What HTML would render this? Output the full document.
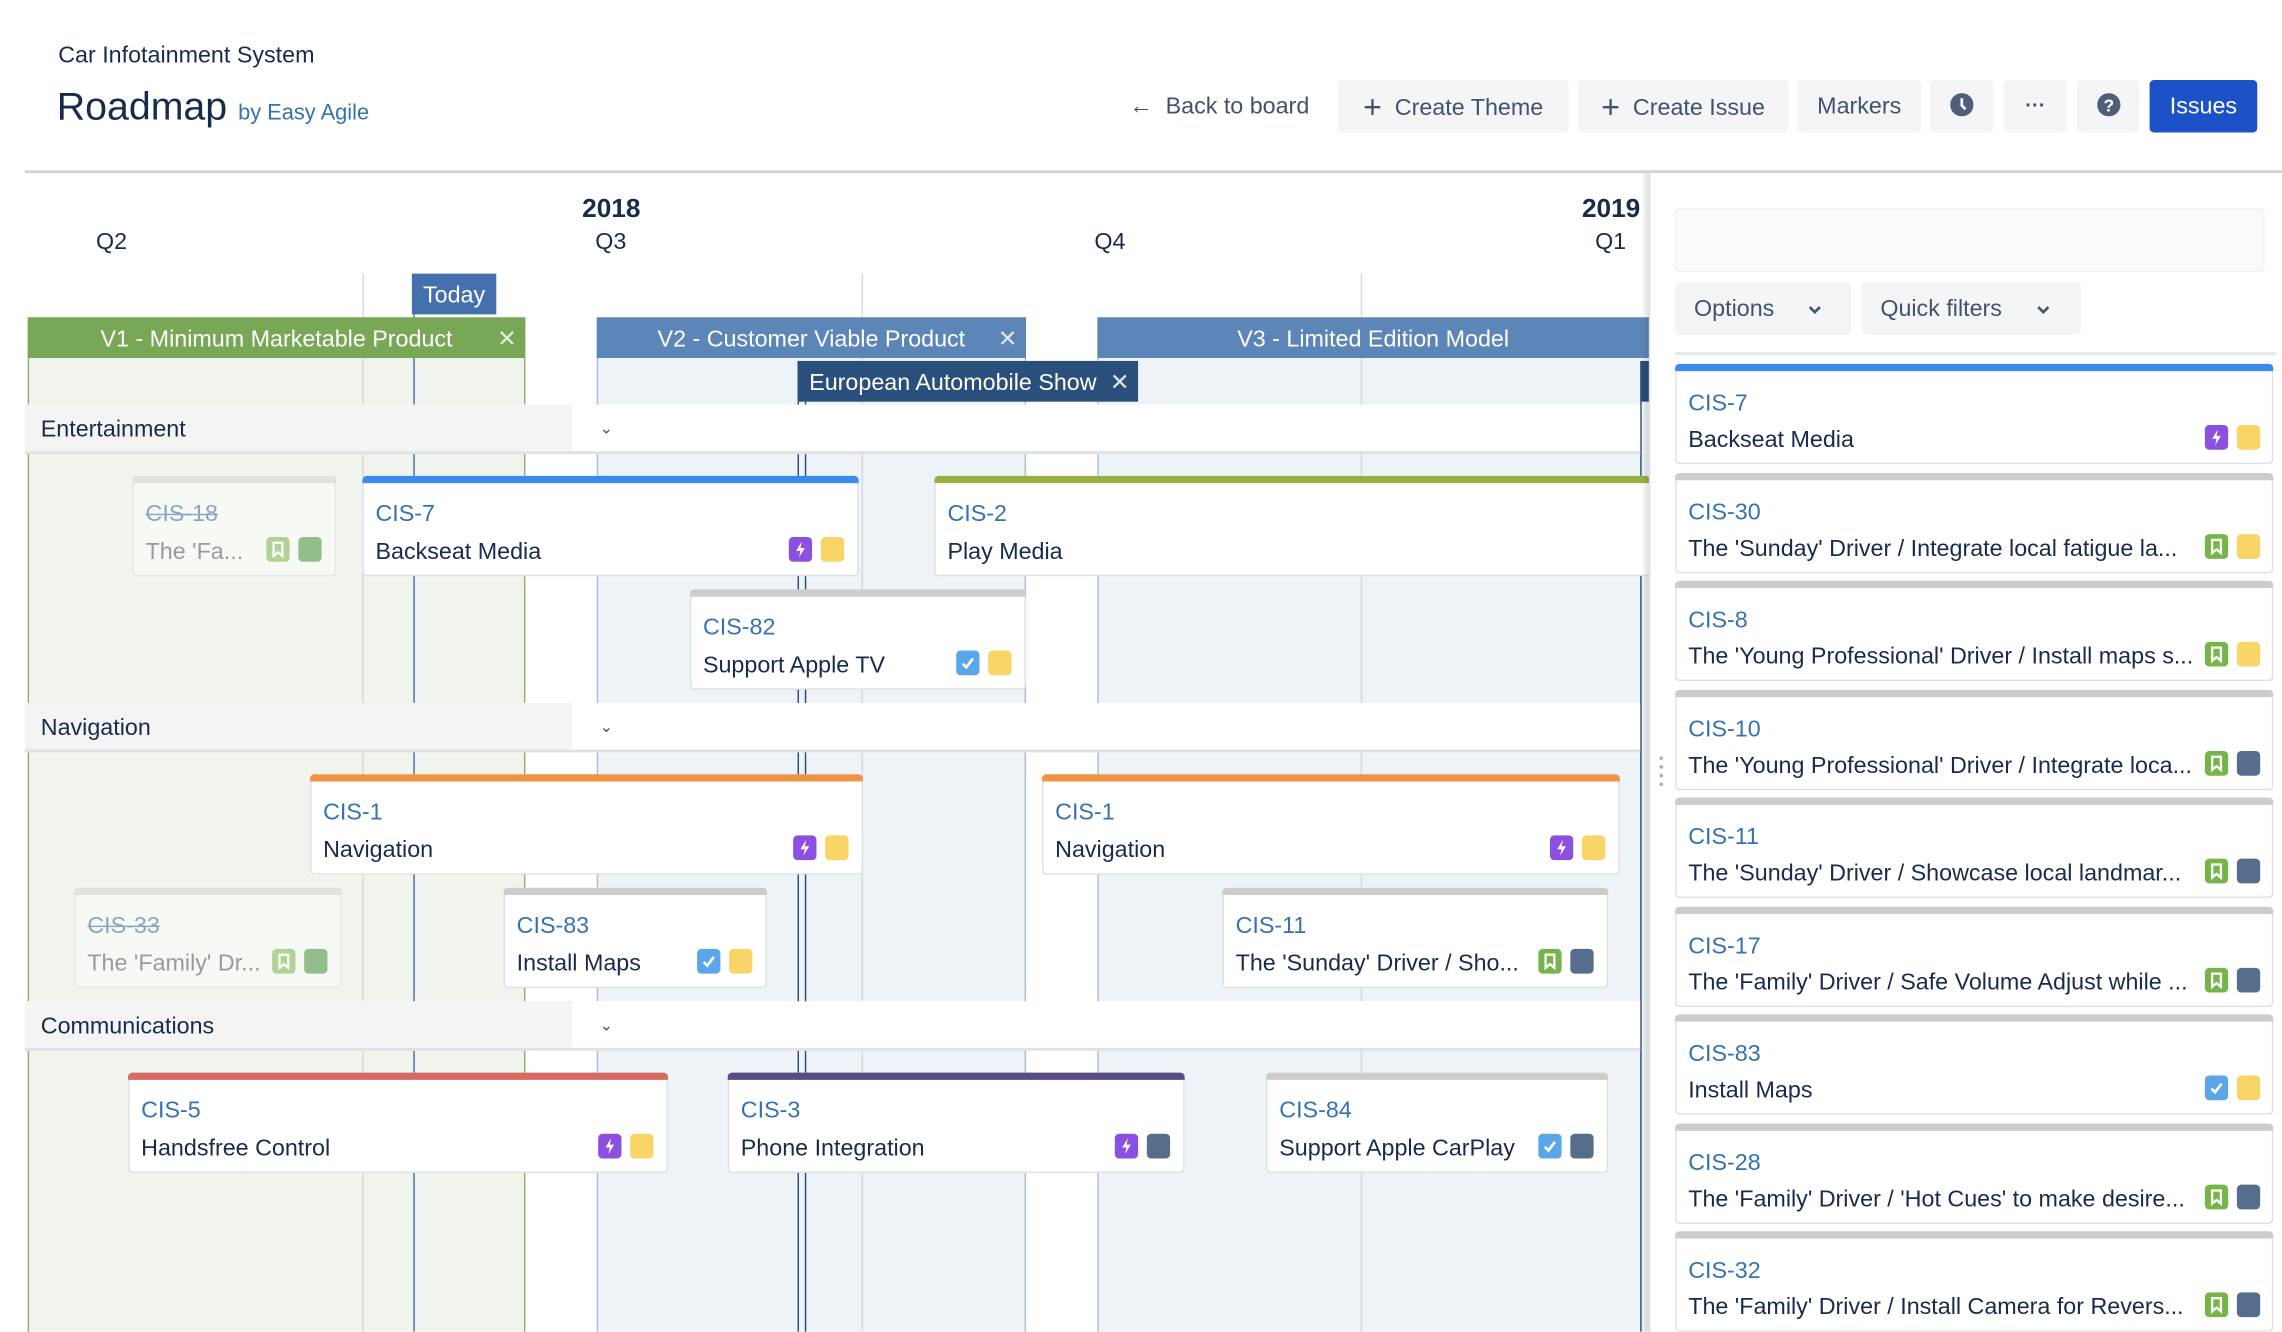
<!DOCTYPE html>
<html><head><meta charset="utf-8">
<style>
html,body{margin:0;padding:0;background:#fff;overflow:hidden;width:2282px;height:1331px}
#w{position:absolute;left:0;top:0;width:1568px;height:915px;transform:scale(1.45536);transform-origin:0 0;font-family:"Liberation Sans",Arial,sans-serif;color:#172b4d}
.a{position:absolute}
.btn{position:absolute;top:55px;height:36px;background:#f4f5f7;border-radius:3px;color:#42526e;font-size:16px;line-height:38px;text-align:center}
.vl{position:absolute;width:1px}
.card{position:absolute;height:69px;background:#fff;border:1px solid #dcdfe4;border-top:none;border-radius:3px;box-sizing:border-box}
.card .bar{position:absolute;left:-1px;right:-1px;top:0;height:5px;border-radius:3px 3px 0 0}
.card .k{position:absolute;left:8px;top:18px;font-size:16px;color:#3572b0;line-height:18px}
.card .t{position:absolute;left:8px;top:44px;font-size:16px;color:#172b4d;line-height:18px;white-space:nowrap}
.card .ics{position:absolute;right:9px;top:42px;height:17px;display:flex;gap:6px}
.ic{display:block;width:16px;height:17px;border-radius:3px}
.ic svg{display:block;width:16px;height:17px}
.pu{background:#8b50df}.ye{background:#f9d467}.gr{background:#77b449}.bl{background:#5aa6e8}.sl{background:#566d8c}.gg{background:#94bd8c}
.fade{background:#f7f9f5;border-color:#e4e7e0}
.fade .k{color:#8aa6c6;text-decoration:line-through}
.fade .t{color:#9a9a9a}
.lane{position:absolute;left:17px;width:1110px;height:32px;background:#fff;border-bottom:2px solid #dfe1e4}
.lane .h{position:absolute;left:0;top:0;width:376px;height:32px;background:#f4f4f4;font-size:16px;line-height:36px;padding-left:11px;box-sizing:border-box}
.lane .c{position:absolute;left:395px;top:0;line-height:34px;font-size:11px;color:#42526e}
.ver{position:absolute;top:218px;height:28px;color:#fff;font-size:16px;line-height:31px;text-align:center}
.ver .x{position:absolute;right:6px;top:0;font-size:16px;opacity:.8}
.rc{position:absolute;left:1151px;width:411px;height:69px;background:#fff;border:1px solid #dcdfe4;border-top:none;border-radius:3px;box-sizing:border-box}
.rc .bar{position:absolute;left:-1px;right:-1px;top:0;height:5px;border-radius:3px 3px 0 0;background:#ccc}
.rc .k{position:absolute;left:8px;top:19px;font-size:16px;color:#3572b0;line-height:18px}
.rc .t{position:absolute;left:8px;top:44px;font-size:16px;line-height:18px;white-space:nowrap}
.rc .ics{position:absolute;right:8px;top:42px;display:flex;gap:6px}
</style></head><body><div id="w">

<div class="a" style="left:40px;top:30px;font-size:16px">Car Infotainment System</div>
<div class="a" style="left:39px;top:58px;font-size:27px">Roadmap <span style="font-size:15px;color:#3572b0">by Easy Agile</span></div>

<div class="a" style="left:776px;top:56px;height:36px;line-height:36px;font-size:16px;color:#42526e">&#8592;&nbsp;&nbsp;Back to board</div>
<div class="btn" style="left:919px;width:159px"><span style="font-size:22px;vertical-align:-2px">+</span>&nbsp;&nbsp;Create Theme</div>
<div class="btn" style="left:1084px;width:145px"><span style="font-size:22px;vertical-align:-2px">+</span>&nbsp;&nbsp;Create Issue</div>
<div class="btn" style="left:1235px;width:85px">Markers</div>
<div class="btn" style="left:1326px;width:44px"><svg width="16" height="16" viewBox="0 0 16 16" style="margin-top:9px"><circle cx="8" cy="8" r="8" fill="#505f79"/><path d="M8 3.5V8.5L10.5 11" stroke="#fff" stroke-width="1.8" fill="none"/></svg></div>
<div class="btn" style="left:1377px;width:43px;font-size:14px;line-height:34px;font-weight:bold">&middot;&middot;&middot;</div>
<div class="btn" style="left:1427px;width:43px"><svg width="16" height="16" viewBox="0 0 16 16" style="margin-top:9px"><circle cx="8" cy="8" r="8" fill="#505f79"/><text x="8" y="12.5" font-size="12" font-weight="bold" fill="#fff" text-anchor="middle" font-family="Liberation Sans">?</text></svg></div>
<div class="btn" style="left:1477px;width:74px;background:#1d51c8;color:#fff">Issues</div>

<div class="a" style="left:17px;top:117px;width:1551px;height:2px;background:#d0d2d6"></div>

<div class="a" style="left:400px;top:133px;font-size:18px;font-weight:bold">2018</div>
<div class="a" style="left:1087px;top:133px;font-size:18px;font-weight:bold">2019</div>
<div class="a" style="left:66px;top:158px;font-size:16px">Q2</div>
<div class="a" style="left:409px;top:158px;font-size:16px">Q3</div>
<div class="a" style="left:752px;top:158px;font-size:16px">Q4</div>
<div class="a" style="left:1096px;top:158px;font-size:16px">Q1</div>

<div class="a" style="left:19px;top:246px;width:342px;height:669px;background:#f0f4ec;border-left:1px solid #8db46a;border-right:1px solid #8db46a;box-sizing:border-box"></div>
<div class="a" style="left:410px;top:246px;width:295px;height:669px;background:#eef3f8;border-left:1px solid #a9bfd9;border-right:1px solid #a9bfd9;box-sizing:border-box"></div>
<div class="a" style="left:754px;top:246px;width:379px;height:669px;background:#eef3f8;border-left:1px solid #a9bfd9;box-sizing:border-box"></div>
<div class="vl" style="left:249px;top:188px;height:727px;background:#d6d8db"></div>
<div class="vl" style="left:592px;top:188px;height:727px;background:#d6d8db"></div>
<div class="vl" style="left:935px;top:188px;height:727px;background:#d6d8db"></div>
<div class="vl" style="left:284px;top:216px;height:699px;background:#4470ad"></div>
<div class="vl" style="left:548px;top:276px;height:639px;background:#2a4c7a"></div>
<div class="vl" style="left:553px;top:276px;height:639px;background:#2a4c7a"></div>
<div class="a" style="left:1127px;top:248px;width:6px;height:28px;background:#2a4c7a"></div>
<div class="vl" style="left:1127px;top:276px;height:639px;background:#2a4c7a"></div>

<div class="a" style="left:283px;top:188px;width:58px;height:28px;background:#4470ad;color:#fff;font-size:16px;line-height:31px;text-align:center">Today</div>
<div class="ver" style="left:19px;width:342px;background:#78a855">V1 - Minimum Marketable Product<span class="x">&#10005;</span></div>
<div class="ver" style="left:410px;width:295px;background:#5d86b8">V2 - Customer Viable Product<span class="x">&#10005;</span></div>
<div class="ver" style="left:754px;width:379px;background:#5d86b8">V3 - Limited Edition Model</div>
<div class="a" style="left:548px;top:248px;width:234px;height:28px;background:#2b4f7c;color:#fff;font-size:16px;line-height:31px;padding-left:8px;box-sizing:border-box">European Automobile Show<span style="position:absolute;right:6px;opacity:.85">&#10005;</span></div>

<div class="lane" style="top:278px"><div class="h">Entertainment</div><div class="c">&#8964;</div></div>
<div class="lane" style="top:483px"><div class="h">Navigation</div><div class="c">&#8964;</div></div>
<div class="lane" style="top:688px"><div class="h">Communications</div><div class="c">&#8964;</div></div>

<div class="card fade" style="left:91px;top:327px;width:140px"><div class="bar" style="background:#e0e2de"></div><div class="k">CIS-18</div><div class="t">The 'Fa...</div><div class="ics"><i class="ic gr" style="opacity:.55"><svg viewBox="0 0 16 17"><path d="M5 4h6v9l-3-2.5L5 13z" fill="none" stroke="#fff" stroke-width="1.6"/></svg></i><i class="ic gg"></i></div></div>

<div class="card" style="left:249px;top:327px;width:341px"><div class="bar" style="background:#3b8bef"></div><div class="k">CIS-7</div><div class="t">Backseat Media</div><div class="ics"><i class="ic pu"><svg viewBox="0 0 16 17"><path d="M9 3L5 9.5h3L7 14l4-6.5H8z" fill="#fff"/></svg></i><i class="ic ye"></i></div></div>

<div class="card" style="left:642px;top:327px;width:491px;border-right:none"><div class="bar" style="background:#96b043"></div><div class="k">CIS-2</div><div class="t">Play Media</div></div>

<div class="card" style="left:474px;top:405px;width:231px"><div class="bar" style="background:#cccccc"></div><div class="k">CIS-82</div><div class="t">Support Apple TV</div><div class="ics"><i class="ic bl"><svg viewBox="0 0 16 17"><path d="M4.5 9l2.5 2.5 4.5-6" stroke="#fff" stroke-width="1.8" fill="none"/></svg></i><i class="ic ye"></i></div></div>

<div class="card" style="left:213px;top:532px;width:380px"><div class="bar" style="background:#ee9444"></div><div class="k">CIS-1</div><div class="t">Navigation</div><div class="ics"><i class="ic pu"><svg viewBox="0 0 16 17"><path d="M9 3L5 9.5h3L7 14l4-6.5H8z" fill="#fff"/></svg></i><i class="ic ye"></i></div></div>

<div class="card" style="left:716px;top:532px;width:397px"><div class="bar" style="background:#ee9444"></div><div class="k">CIS-1</div><div class="t">Navigation</div><div class="ics"><i class="ic pu"><svg viewBox="0 0 16 17"><path d="M9 3L5 9.5h3L7 14l4-6.5H8z" fill="#fff"/></svg></i><i class="ic ye"></i></div></div>

<div class="card fade" style="left:51px;top:610px;width:184px"><div class="bar" style="background:#e0e2de"></div><div class="k">CIS-33</div><div class="t">The 'Family' Dr...</div><div class="ics"><i class="ic gr" style="opacity:.55"><svg viewBox="0 0 16 17"><path d="M5 4h6v9l-3-2.5L5 13z" fill="none" stroke="#fff" stroke-width="1.6"/></svg></i><i class="ic gg"></i></div></div>

<div class="card" style="left:346px;top:610px;width:181px"><div class="bar" style="background:#cccccc"></div><div class="k">CIS-83</div><div class="t">Install Maps</div><div class="ics"><i class="ic bl"><svg viewBox="0 0 16 17"><path d="M4.5 9l2.5 2.5 4.5-6" stroke="#fff" stroke-width="1.8" fill="none"/></svg></i><i class="ic ye"></i></div></div>

<div class="card" style="left:840px;top:610px;width:265px"><div class="bar" style="background:#cccccc"></div><div class="k">CIS-11</div><div class="t">The 'Sunday' Driver / Sho...</div><div class="ics"><i class="ic gr"><svg viewBox="0 0 16 17"><path d="M5 4h6v9l-3-2.5L5 13z" fill="none" stroke="#fff" stroke-width="1.6"/></svg></i><i class="ic sl"></i></div></div>

<div class="card" style="left:88px;top:737px;width:371px"><div class="bar" style="background:#d76b61"></div><div class="k">CIS-5</div><div class="t">Handsfree Control</div><div class="ics"><i class="ic pu"><svg viewBox="0 0 16 17"><path d="M9 3L5 9.5h3L7 14l4-6.5H8z" fill="#fff"/></svg></i><i class="ic ye"></i></div></div>

<div class="card" style="left:500px;top:737px;width:314px"><div class="bar" style="background:#5b4a83"></div><div class="k">CIS-3</div><div class="t">Phone Integration</div><div class="ics"><i class="ic pu"><svg viewBox="0 0 16 17"><path d="M9 3L5 9.5h3L7 14l4-6.5H8z" fill="#fff"/></svg></i><i class="ic sl"></i></div></div>

<div class="card" style="left:870px;top:737px;width:235px"><div class="bar" style="background:#cccccc"></div><div class="k">CIS-84</div><div class="t">Support Apple CarPlay</div><div class="ics"><i class="ic bl"><svg viewBox="0 0 16 17"><path d="M4.5 9l2.5 2.5 4.5-6" stroke="#fff" stroke-width="1.8" fill="none"/></svg></i><i class="ic sl"></i></div></div>

<div class="a" style="left:1128px;top:119px;width:5px;height:796px;background:linear-gradient(to right,rgba(0,0,0,0),rgba(0,0,0,.12))"></div>
<div class="a" style="left:1133px;top:119px;width:435px;height:796px;background:#fff;border-left:1px solid #dfe1e4"></div>
<div class="a" style="left:1140px;top:518px;width:3px;height:22px;background:radial-gradient(circle,#aab 1px,transparent 1.5px) 0 0/3px 6px"></div>
<div class="a" style="left:1151px;top:143px;width:405px;height:44px;background:#fafbfc;border:1px solid #f0f1f3;border-radius:3px;box-sizing:border-box"></div>
<div class="a" style="left:1151px;top:194px;width:121px;height:36px;background:#f4f5f7;border-radius:3px;color:#42526e;font-size:16px;line-height:38px;padding-left:13px;box-sizing:border-box">Options<svg width="10" height="8" viewBox="0 0 10 8" style="position:absolute;left:91px;top:15px"><path d="M1.5 2l3.5 3.5L8.5 2" stroke="#42526e" stroke-width="1.8" fill="none"/></svg></div>
<div class="a" style="left:1279px;top:194px;width:151px;height:36px;background:#f4f5f7;border-radius:3px;color:#42526e;font-size:16px;line-height:38px;padding-left:13px;box-sizing:border-box">Quick filters<svg width="10" height="8" viewBox="0 0 10 8" style="position:absolute;left:120px;top:15px"><path d="M1.5 2l3.5 3.5L8.5 2" stroke="#42526e" stroke-width="1.8" fill="none"/></svg></div>
<div class="a" style="left:1151px;top:242px;width:413px;height:2px;background:#e6e7ea"></div>

<div class="rc" style="top:250px"><div class="bar" style="background:#3b8bef"></div><div class="k">CIS-7</div><div class="t">Backseat Media</div><div class="ics"><i class="ic pu"><svg viewBox="0 0 16 17"><path d="M9 3L5 9.5h3L7 14l4-6.5H8z" fill="#fff"/></svg></i><i class="ic ye"></i></div></div>
<div class="rc" style="top:325px"><div class="bar"></div><div class="k">CIS-30</div><div class="t">The 'Sunday' Driver / Integrate local fatigue la...</div><div class="ics"><i class="ic gr"><svg viewBox="0 0 16 17"><path d="M5 4h6v9l-3-2.5L5 13z" fill="none" stroke="#fff" stroke-width="1.6"/></svg></i><i class="ic ye"></i></div></div>
<div class="rc" style="top:399px"><div class="bar"></div><div class="k">CIS-8</div><div class="t">The 'Young Professional' Driver / Install maps s...</div><div class="ics"><i class="ic gr"><svg viewBox="0 0 16 17"><path d="M5 4h6v9l-3-2.5L5 13z" fill="none" stroke="#fff" stroke-width="1.6"/></svg></i><i class="ic ye"></i></div></div>
<div class="rc" style="top:474px"><div class="bar"></div><div class="k">CIS-10</div><div class="t">The 'Young Professional' Driver / Integrate loca...</div><div class="ics"><i class="ic gr"><svg viewBox="0 0 16 17"><path d="M5 4h6v9l-3-2.5L5 13z" fill="none" stroke="#fff" stroke-width="1.6"/></svg></i><i class="ic sl"></i></div></div>
<div class="rc" style="top:548px"><div class="bar"></div><div class="k">CIS-11</div><div class="t">The 'Sunday' Driver / Showcase local landmar...</div><div class="ics"><i class="ic gr"><svg viewBox="0 0 16 17"><path d="M5 4h6v9l-3-2.5L5 13z" fill="none" stroke="#fff" stroke-width="1.6"/></svg></i><i class="ic sl"></i></div></div>
<div class="rc" style="top:623px"><div class="bar"></div><div class="k">CIS-17</div><div class="t">The 'Family' Driver / Safe Volume Adjust while ...</div><div class="ics"><i class="ic gr"><svg viewBox="0 0 16 17"><path d="M5 4h6v9l-3-2.5L5 13z" fill="none" stroke="#fff" stroke-width="1.6"/></svg></i><i class="ic sl"></i></div></div>
<div class="rc" style="top:697px"><div class="bar"></div><div class="k">CIS-83</div><div class="t">Install Maps</div><div class="ics"><i class="ic bl"><svg viewBox="0 0 16 17"><path d="M4.5 9l2.5 2.5 4.5-6" stroke="#fff" stroke-width="1.8" fill="none"/></svg></i><i class="ic ye"></i></div></div>
<div class="rc" style="top:772px"><div class="bar"></div><div class="k">CIS-28</div><div class="t">The 'Family' Driver / 'Hot Cues' to make desire...</div><div class="ics"><i class="ic gr"><svg viewBox="0 0 16 17"><path d="M5 4h6v9l-3-2.5L5 13z" fill="none" stroke="#fff" stroke-width="1.6"/></svg></i><i class="ic sl"></i></div></div>
<div class="rc" style="top:846px"><div class="bar"></div><div class="k">CIS-32</div><div class="t">The 'Family' Driver / Install Camera for Revers...</div><div class="ics"><i class="ic gr"><svg viewBox="0 0 16 17"><path d="M5 4h6v9l-3-2.5L5 13z" fill="none" stroke="#fff" stroke-width="1.6"/></svg></i><i class="ic sl"></i></div></div>

</div></body></html>
